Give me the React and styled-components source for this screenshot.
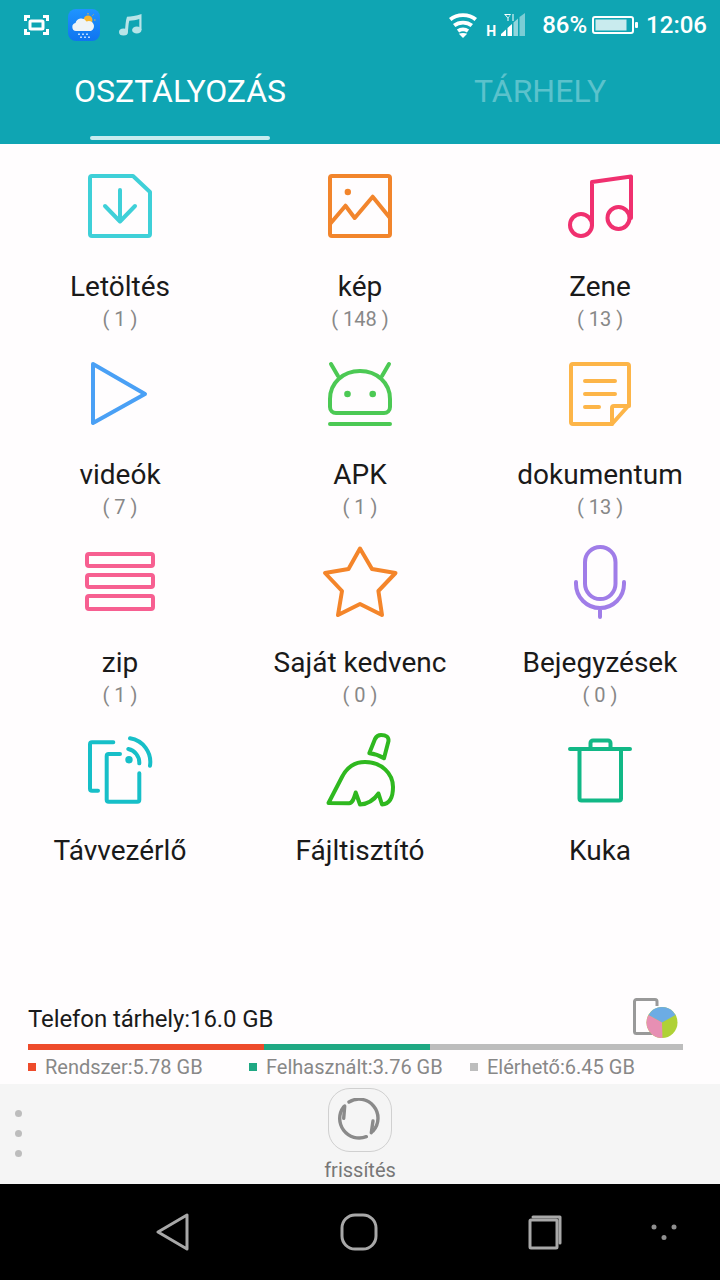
import React from 'react'
import styled, { createGlobalStyle } from 'styled-components'

const GlobalStyle = createGlobalStyle`
  html, body { margin: 0; padding: 0; background: #000; }
  * { box-sizing: border-box; }
`

const Page = styled.div`
  display: flex;
  flex-direction: column;
  width: 720px;
  height: 1280px;
  overflow: hidden;
  background: #fffdfe;
  font-family: Roboto, sans-serif;
`

const Header = styled.header`
  height: 144px;
  flex: none;
  background: #0fa5b3;
  color: #fff;
`

const StatusBar = styled.div`
  display: flex;
  align-items: center;
  justify-content: space-between;
  height: 50px;
  padding: 0 13px 0 24px;
`

const StatusGroup = styled.div`
  display: flex;
  align-items: center;
  gap: ${(p) => p.$gap || 0}px;
`

const Spacer = styled.span`
  width: ${(p) => p.$width}px;
`

const StatusText = styled.span`
  font-size: 24px;
  font-weight: 500;
  line-height: 50px;
`

const NetworkType = styled.span`
  width: 15px;
  margin-top: 12px;
  font-size: 14px;
  font-weight: 700;
  line-height: 16px;
`

const Tabs = styled.div`
  display: grid;
  grid-template-columns: 1fr 1fr;
  height: 94px;
`

const Tab = styled.div`
  display: flex;
  flex-direction: column;
  align-items: center;
  justify-content: space-between;
  padding: 22px 0 4px;
  font-size: 32px;
  line-height: 38px;
  color: ${(p) => (p.$active ? '#ffffff' : '#5bc2cc')};
`

const TabLine = styled.div`
  width: 180px;
  height: 4px;
  border-radius: 2px;
  background: #c6ecef;
`

const Grid = styled.div`
  display: grid;
  grid-template-columns: repeat(3, 240px);
  grid-auto-rows: 188px;
  padding-top: 24px;
`

const Cell = styled.div`
  display: flex;
  flex-direction: column;
  align-items: center;
`

const IconSvg = styled.svg`
  display: block;
  width: 100px;
  height: 80px;
  fill: none;
  stroke: ${(p) => p.$color};
  stroke-width: 4;
  stroke-linecap: round;
  stroke-linejoin: round;
`

const Label = styled.div`
  margin-top: 23px;
  font-size: 28px;
  line-height: 32px;
  color: #1a1a1a;
  white-space: nowrap;
`

const Count = styled.div`
  font-size: 20px;
  line-height: 32px;
  color: #888;
  white-space: pre;
`

const Storage = styled.section`
  margin-top: auto;
  padding: 0 37px 0 28px;
  height: 88px;
`

const StorageHead = styled.div`
  display: flex;
  justify-content: space-between;
  align-items: flex-end;
  height: 48px;

  & > svg {
    margin: 0 4px 6px 0;
  }
`

const StorageTitle = styled.div`
  margin-bottom: 3px;
  font-size: 24px;
  line-height: 44px;
  letter-spacing: -0.1px;
  color: #1a1a1a;
`

const StorageBar = styled.div`
  display: flex;
  height: 6px;
`

const BarPart = styled.div`
  height: 100%;
  width: ${(p) => (p.$width ? `${p.$width}px` : 'auto')};
  flex: ${(p) => (p.$width ? 'none' : 1)};
  background: ${(p) => p.$color};
`

const Legend = styled.div`
  display: flex;
  margin-top: 5px;
`

const LegendItem = styled.div`
  display: flex;
  align-items: center;
  width: ${(p) => p.$width}px;
  font-size: 20px;
  line-height: 24px;
  color: #888;
  white-space: nowrap;
`

const LegendMark = styled.i`
  width: 8px;
  height: 8px;
  margin-right: 9px;
  background: ${(p) => p.$color};
`

const ActionBar = styled.div`
  position: relative;
  display: flex;
  flex-direction: column;
  align-items: center;
  flex: none;
  height: 100px;
  padding-top: 4px;
  background: #f5f5f5;
`

const MoreDots = styled.div`
  position: absolute;
  left: 15px;
  top: 26px;
  display: flex;
  flex-direction: column;
  gap: 13px;
`

const Dot = styled.span`
  display: block;
  width: 7px;
  height: 7px;
  border-radius: 50%;
  background: #bdbdbd;
`

const RefreshButton = styled.div`
  display: flex;
  flex: none;
  align-items: center;
  justify-content: center;
  width: 64px;
  height: 64px;
  border: 1px solid #d0d0d0;
  border-radius: 22px;
`

const RefreshLabel = styled.div`
  margin-top: 6px;
  font-size: 20px;
  line-height: 24px;
  color: #777;
`

const NavBar = styled.nav`
  flex: none;
  height: 96px;
  padding: 0 30px 0 80px;
  background: #000;
  display: grid;
  grid-template-columns: repeat(3, 186px) 1fr;
  align-items: center;
  justify-items: center;
`

const NavSvg = styled.svg`
  display: block;
  fill: none;
  stroke: #a8a8a8;
  stroke-width: 3;
  stroke-linecap: round;
  stroke-linejoin: round;
`

const items = [
  { name: 'Letöltés', count: '( 1 )', color: '#3fd0d8', icon: (
    <>
      <path d="M22 8H63L80 24V66a2 2 0 0 1-2 2H22a2 2 0 0 1-2-2V10a2 2 0 0 1 2-2z" />
      <path d="M50 22V53M35 38L50 53.5L65 38" />
    </>
  ) },
  { name: 'kép', count: '( 148 )', color: '#f2852c', icon: (
    <>
      <rect x="20" y="8" width="60" height="60" rx="2" />
      <path d="M20 56L35.5 37.7L44.7 50L62.7 28.7L80 50" />
      <circle cx="37.8" cy="24" r="3.2" fill="#f2852c" stroke="none" />
    </>
  ) },
  { name: 'Zene', count: '( 13 )', color: '#f0306f', icon: (
    <>
      <path d="M42 57V14L81 8.5V50" />
      <circle cx="31" cy="57" r="11" />
      <circle cx="68.5" cy="50" r="11" />
    </>
  ) },
  { name: 'videók', count: '( 7 )', color: '#4aa0f5', icon: (
    <path d="M23 8L75 38L23 67z" />
  ) },
  { name: 'APK', count: '( 1 )', color: '#4cc954', icon: (
    <>
      <path d="M26 57H74a6 6 0 0 0 6-6V43C80 27 67 15 50 15S20 27 20 43V51a6 6 0 0 0 6 6z" />
      <path d="M21 8L28 20M79 8L72 20M20 68H80" />
      <circle cx="37.5" cy="38" r="3.3" fill="#4cc954" stroke="none" />
      <circle cx="62.7" cy="38" r="3.3" fill="#4cc954" stroke="none" />
    </>
  ) },
  { name: 'dokumentum', count: '( 13 )', color: '#fdb548', icon: (
    <>
      <path d="M23 8H77a2 2 0 0 1 2 2V49L62 68H23a2 2 0 0 1-2-2V10a2 2 0 0 1 2-2z" />
      <path d="M62 68V52a2 2 0 0 1 2-2H79" />
      <path d="M35 25H65M35 38H65M35 51H49" />
    </>
  ) },
  { name: 'zip', count: '( 1 )', color: '#f75f91', icon: (
    <>
      <rect x="17" y="10" width="66" height="12" rx="2" />
      <rect x="17" y="31" width="66" height="12" rx="2" />
      <rect x="17" y="52" width="66" height="13" rx="2" />
    </>
  ) },
  { name: 'Saját kedvenc', count: '( 0 )', color: '#f4852a', icon: (
    <path d="M50 4.5L62 25L85.5 29L68.4 47L72 71L50 60L28 71L32 47L15 29L38.5 25z" />
  ) },
  { name: 'Bejegyzések', count: '( 0 )', color: '#a07de8', icon: (
    <>
      <rect x="35" y="3" width="30.5" height="52" rx="15.2" />
      <path d="M26 38v2a24 24 0 0 0 48 0v-2M50 64V73" />
    </>
  ) },
  { name: 'Távvezérlő', color: '#17bfc8', icon: (
    <>
      <path d="M43.3 10.3H22a2 2 0 0 0-2 2V56.7a2 2 0 0 0 2 2H28" />
      <path d="M50 22H38.7a2 2 0 0 0-2 2V67.7a2 2 0 0 0 2 2H67.3a2 2 0 0 0 2-2V41.3" />
      <path d="M58.3 17A14 14 0 0 1 69.3 31.3M60 6.3A24 24 0 0 1 80 33.7" />
      <circle cx="59" cy="27.7" r="3.7" fill="#17bfc8" stroke="none" />
    </>
  ) },
  { name: 'Fájltisztító', color: '#2fb81f', icon: (
    <>
      <path d="M59.3 21.3L65 7Q67 3 71 3Q79 3 78.5 9L74 26.3Q67 22 59.3 21.3z" />
      <path d="M18.5 71L32 45C38 33 47 30 55 30C72 30 83 42 83 55C83 66 79 72 72 72.5L68.5 61.5C64 68 58 72 50 72.5L45.7 60.5C44 66 43 71 39 71.2z" />
    </>
  ) },
  { name: 'Kuka', color: '#12b886', icon: (
    <>
      <path d="M20 17H80M29.500 17V66.500a2 2 0 0 0 2 2H69a2 2 0 0 0 2-2V17" />
      <path d="M40.500 17V11a2.500 2.500 0 0 1 2.500-2.500H58a2.500 2.500 0 0 1 2.500 2.500V17" />
    </>
  ) },
]

function ScreenshotIcon() {
  return (
    <svg width="25" height="20" viewBox="0 0 25 20" fill="none" stroke="#fff" strokeWidth="3">
      <path d="M1.500 6V1.500H6M19 1.500H23.500V6M1.500 14V18.500H6M19 18.500H23.500V14" />
      <rect x="6" y="6" width="13" height="8" rx="1" />
    </svg>
  )
}

function WeatherIcon() {
  return (
    <svg width="32" height="32" viewBox="0 0 32 32">
      <defs>
        <linearGradient id="weatherBg" x1="0" y1="0" x2="0" y2="1">
          <stop offset="0" stopColor="#1f94ff" />
          <stop offset="1" stopColor="#0f74f0" />
        </linearGradient>
      </defs>
      <rect width="32" height="32" rx="8" fill="url(#weatherBg)" />
      <circle cx="20" cy="11" r="4.500" fill="#f7b52c" />
      <path d="M20 4V5.500M26 11H27.500M24.500 6.500L25.500 5.500M24.500 15.500L25.500 16.500" stroke="#f7b52c" strokeWidth="1" />
      <path d="M8 22a4 4 0 0 1-.5-7.900A6 6 0 0 1 18.500 12.500A4.800 4.800 0 0 1 23 22z" fill="#eef4f6" />
      <path d="M11 24.500v1.500M15 24.500v1.500M19 24.500v1.500M13 27.500v1.500M17 27.500v1.500M21 27.500v1.500" stroke="#fff" strokeWidth="1.400" />
    </svg>
  )
}

function NoteIcon() {
  return (
    <svg width="23" height="22" viewBox="0 0 23 22" fill="#b7e4e8" stroke="none">
      <ellipse cx="4.500" cy="18" rx="4.500" ry="3.600" />
      <ellipse cx="17.800" cy="16" rx="4.700" ry="3.600" />
      <path d="M5.800 18C6.500 12 6.500 7 8 2.800C12 2.400 17 1.800 22.500 0V16H20.300V5C17 6 13.500 6.500 10.300 6.800C9.300 10 9.500 14 8.800 18z" />
    </svg>
  )
}

function WifiIcon() {
  return (
    <svg width="28" height="25" viewBox="0 0 28 25" fill="none" stroke="#fff" strokeWidth="3.800">
      <path d="M1.200 6.500C8 0.600 20 0.600 26.800 6.500" />
      <path d="M5.200 12.500C10 8.600 18 8.600 22.800 12.500" />
      <path d="M9 18C11.800 16 16.200 16 19 18" />
      <path d="M9.800 20.800C12 19.600 16 19.600 18.200 20.800L14 25z" fill="#fff" stroke="none" />
    </svg>
  )
}

function SignalIcon() {
  return (
    <svg width="25" height="24" viewBox="15 0 25 24" fill="#fff">
      <path d="M18 1H25L22.500 5V8H21.500V5zM20 2L22 4.500L24 2z" fillRule="evenodd" />
      <path d="M27 1V8" stroke="#fff" strokeWidth="1" />
      <path d="M15 23V21L20 16.500V23z" />
      <path d="M21.500 23V15L26 11V23z" />
      <path d="M27.500 23V9.500L32 5.500V23z" fillOpacity="0.55" />
      <path d="M33.500 23V4L39 0V23z" fillOpacity="0.45" />
    </svg>
  )
}

function BatteryIcon() {
  return (
    <svg width="46" height="18" viewBox="0 0 46 18">
      <rect x="1" y="1" width="40" height="16" rx="2" fill="none" stroke="#fff" strokeWidth="2" />
      <rect x="3.500" y="3.500" width="31" height="11" fill="#c9ebee" />
      <rect x="43" y="6" width="3" height="6" rx="1" fill="#fff" />
    </svg>
  )
}

function StorageIcon() {
  return (
    <svg width="46" height="40" viewBox="0 0 46 40">
      <path d="M19 35.500H3.500a2 2 0 0 1-2-2V3.500a2 2 0 0 1 2-2H22a2 2 0 0 1 2 2V8" fill="none" stroke="#999" strokeWidth="3" />
      <circle cx="29" cy="24.500" r="15.500" fill="#afd136" />
      <path d="M29 24.500L15.500 17A15.500 15.500 0 0 1 42.500 17z" fill="#6cace4" />
      <path d="M29 24.500L15.500 17A15.500 15.500 0 0 0 29.500 40z" fill="#e78fb3" />
    </svg>
  )
}

function RefreshIcon() {
  return (
    <svg width="44" height="44" viewBox="2 0 44 44" fill="none" stroke="#8a8a8a" strokeWidth="3.400" strokeLinecap="round">
      <path d="M13 4A19 19 0 0 1 37 33" />
      <path d="M30.300 38.700A19.500 19.500 0 0 1 7.700 8.700" />
      <path d="M8.700 8L7.700 20.300M37 23L35.300 34.700" />
    </svg>
  )
}

export default function App() {
  return (
    <Page>
      <GlobalStyle />
      <Header>
        <StatusBar>
          <StatusGroup $gap={19}>
            <ScreenshotIcon />
            <WeatherIcon />
            <NoteIcon />
          </StatusGroup>
          <StatusGroup>
            <WifiIcon />
            <Spacer $width={9} />
            <NetworkType>H</NetworkType>
            <SignalIcon />
            <Spacer $width={16} />
            <StatusText>86%</StatusText>
            <Spacer $width={5} />
            <BatteryIcon />
            <Spacer $width={8} />
            <StatusText>12:06</StatusText>
          </StatusGroup>
        </StatusBar>
        <Tabs>
          <Tab $active>
            OSZTÁLYOZÁS
            <TabLine />
          </Tab>
          <Tab>TÁRHELY</Tab>
        </Tabs>
      </Header>

      <Grid>
        {items.map((item) => (
          <Cell key={item.name}>
            <IconSvg $color={item.color} viewBox="0 0 100 80">{item.icon}</IconSvg>
            <Label>{item.name}</Label>
            {item.count && <Count>{item.count}</Count>}
          </Cell>
        ))}
      </Grid>

      <Storage>
        <StorageHead>
          <StorageTitle>Telefon tárhely:16.0 GB</StorageTitle>
          <StorageIcon />
        </StorageHead>
        <StorageBar>
          <BarPart $color="#ee4b2b" $width={236} />
          <BarPart $color="#1fa883" $width={166} />
          <BarPart $color="#bdbdbd" />
        </StorageBar>
        <Legend>
          <LegendItem $width={221}><LegendMark $color="#ee4b2b" />Rendszer:5.78 GB</LegendItem>
          <LegendItem $width={221}><LegendMark $color="#1fa883" />Felhasznált:3.76 GB</LegendItem>
          <LegendItem $width={200}><LegendMark $color="#bdbdbd" />Elérhető:6.45 GB</LegendItem>
        </Legend>
      </Storage>

      <ActionBar>
        <MoreDots>
          <Dot /><Dot /><Dot />
        </MoreDots>
        <RefreshButton><RefreshIcon /></RefreshButton>
        <RefreshLabel>frissítés</RefreshLabel>
      </ActionBar>

      <NavBar>
        <NavSvg width="34" height="38" viewBox="0 0 34 38">
          <path d="M31 2V36L2 19z" />
        </NavSvg>
        <NavSvg width="38" height="38" viewBox="0 0 38 38">
          <rect x="2" y="2" width="34" height="34" rx="13" />
        </NavSvg>
        <NavSvg width="34" height="35" viewBox="0 0 34 35">
          <rect x="2" y="5" width="27" height="28" rx="1" />
          <path d="M5 2H32V28" />
        </NavSvg>
        <svg width="26" height="16" viewBox="0 0 26 16" fill="#8f8f8f">
          <circle cx="3" cy="3" r="2.500" />
          <circle cx="23" cy="3" r="2.500" />
          <circle cx="13" cy="13.500" r="2.500" />
        </svg>
      </NavBar>
    </Page>
  )
}
